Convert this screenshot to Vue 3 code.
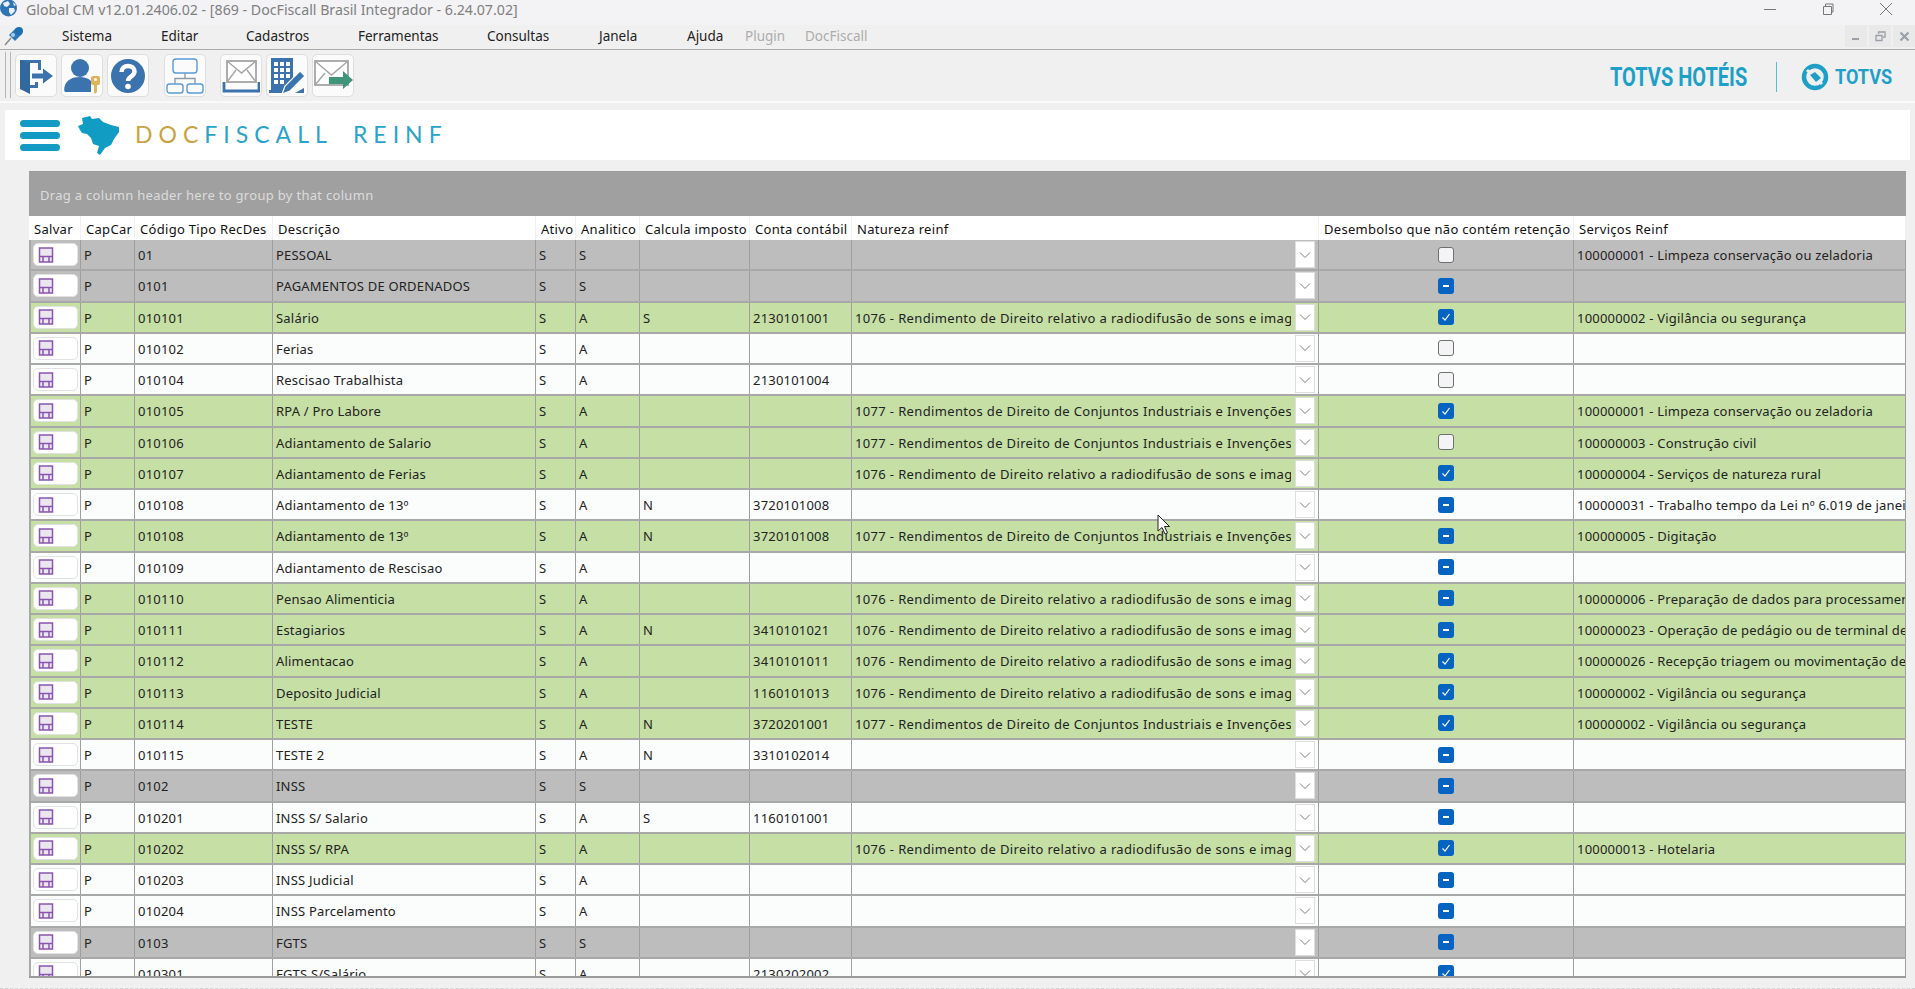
<script setup>
const menu = [
  { t: 'Sistema', w: 99, c: '' }, { t: 'Editar', w: 85, c: '' }, { t: 'Cadastros', w: 112, c: '' },
  { t: 'Ferramentas', w: 129, c: '' }, { t: 'Consultas', w: 112, c: '' }, { t: 'Janela', w: 88, c: '' },
  { t: 'Ajuda', w: 58, c: '' }, { t: 'Plugin', w: 60, c: 'off' }, { t: 'DocFiscall', w: 70, c: 'off' }
]
const headers = ['Salvar', 'CapCar', 'Código Tipo RecDes', 'Descrição', 'Ativo', 'Analitico', 'Calcula imposto', 'Conta contábil', 'Natureza reinf', 'Desembolso que não contém retenção', 'Serviços Reinf']
const A = '1076 - Rendimento de Direito relativo a radiodifusão de sons e imagens'
const B = '1077 - Rendimentos de Direito de Conjuntos Industriais e Invenções'
const V = '100000002 - Vigilância ou segurança'
const L = '100000001 - Limpeza conservação ou zeladoria'
// kind, code, description, analitico, calcula, conta, natureza, check, servico
const rows = [
  ['g', '01', 'PESSOAL', 'S', '', '', '', 'u', L],
  ['g', '0101', 'PAGAMENTOS DE ORDENADOS', 'S', '', '', '', 'm', ''],
  ['v', '010101', 'Salário', 'A', 'S', '2130101001', A, 'c', V],
  ['w', '010102', 'Ferias', 'A', '', '', '', 'u', ''],
  ['w', '010104', 'Rescisao Trabalhista', 'A', '', '2130101004', '', 'u', ''],
  ['v', '010105', 'RPA / Pro Labore', 'A', '', '', B, 'c', L],
  ['v', '010106', 'Adiantamento de Salario', 'A', '', '', B, 'u', '100000003 - Construção civil'],
  ['v', '010107', 'Adiantamento de Ferias', 'A', '', '', A, 'c', '100000004 - Serviços de natureza rural'],
  ['w', '010108', 'Adiantamento de 13º', 'A', 'N', '3720101008', '', 'm', '100000031 - Trabalho tempo da Lei nº 6.019 de janeiro de 1974'],
  ['v', '010108', 'Adiantamento de 13º', 'A', 'N', '3720101008', B, 'm', '100000005 - Digitação'],
  ['w', '010109', 'Adiantamento de Rescisao', 'A', '', '', '', 'm', ''],
  ['v', '010110', 'Pensao Alimenticia', 'A', '', '', A, 'm', '100000006 - Preparação de dados para processamento'],
  ['v', '010111', 'Estagiarios', 'A', 'N', '3410101021', A, 'm', '100000023 - Operação de pedágio ou de terminal de transporte'],
  ['v', '010112', 'Alimentacao', 'A', '', '3410101011', A, 'c', '100000026 - Recepção triagem ou movimentação de materiais'],
  ['v', '010113', 'Deposito Judicial', 'A', '', '1160101013', A, 'c', V],
  ['v', '010114', 'TESTE', 'A', 'N', '3720201001', B, 'c', V],
  ['w', '010115', 'TESTE 2', 'A', 'N', '3310102014', '', 'm', ''],
  ['g', '0102', 'INSS', 'S', '', '', '', 'm', ''],
  ['w', '010201', 'INSS S/ Salario', 'A', 'S', '1160101001', '', 'm', ''],
  ['v', '010202', 'INSS S/ RPA', 'A', '', '', A, 'c', '100000013 - Hotelaria'],
  ['w', '010203', 'INSS Judicial', 'A', '', '', '', 'm', ''],
  ['w', '010204', 'INSS Parcelamento', 'A', '', '', '', 'm', ''],
  ['g', '0103', 'FGTS', 'S', '', '', '', 'm', ''],
  ['w', '010301', 'FGTS S/Salário', 'A', '', '2130202002', '', 'c', '']
]
</script>

<template>
  <div class="page">
    <div class="title">
      <svg class="globe" width="18" height="17" viewBox="0 0 18 17">
        <circle cx="8.5" cy="8" r="8.5" fill="#2f74b5" />
        <path d="M3 3 L8 1 L10 4 L7 7 L4 6 Z M9 8 L14 8 L15 11 L11 15 L9 12 Z M13 2 L16 5 L14 6 Z" fill="#e9f0f7" />
      </svg>
      <span class="title-text">Global CM v12.01.2406.02 - [869 - DocFiscall Brasil Integrador - 6.24.07.02]</span>
      <div class="win">
        <svg width="14" height="14" viewBox="0 0 14 14"><path d="M1 7.5H13" stroke="#777" fill="none" /></svg>
        <svg width="14" height="14" viewBox="0 0 14 14"><path d="M2.5 4.5h8v8h-8z M4.5 4.5v-2.5h7.5v8h-1.5" stroke="#777" fill="none" /></svg>
        <svg width="14" height="14" viewBox="0 0 14 14"><path d="M1 1L13 13M13 1L1 13" stroke="#777" fill="none" /></svg>
      </div>
    </div>

    <div class="menubar">
      <svg class="pin" width="20" height="20" viewBox="0 0 20 20">
        <path d="M1 19 L7 12" stroke="#8a8a8a" stroke-width="1.5" />
        <path d="M5 9 L12 2 L18 8 L11 15 Z" fill="#2f78b8" />
        <circle cx="15" cy="5" r="4" fill="#1d6fb0" />
        <circle cx="9" cy="9" r="2" fill="#9fd0ef" />
      </svg>
      <div class="menu-items">
        <span v-for="m in menu" :key="m.t" class="menu-item" :class="m.c" :style="{ width: m.w + 'px' }">{{ m.t }}</span>
      </div>
      <div class="mdi">
        <span class="mdi-btn"><svg width="10" height="10" viewBox="0 0 10 10"><path d="M1 8H8" stroke="#9aa0a8" stroke-width="2" /></svg></span>
        <span class="mdi-btn"><svg width="11" height="11" viewBox="0 0 11 11"><path d="M1 4.5h6v5h-6z M3.5 3v-2h6.5v5h-2" stroke="#9aa0a8" stroke-width="1.3" fill="none" /></svg></span>
        <span class="mdi-btn"><svg width="11" height="11" viewBox="0 0 11 11"><path d="M1.5 1.5L9.5 9.5M9.5 1.5L1.5 9.5" stroke="#9aa0a8" stroke-width="2.2" /></svg></span>
      </div>
    </div>

    <div class="toolbar">
      <div class="grip"></div>
      <div class="tools">
        <div class="tool">
          <svg width="36" height="36" viewBox="0 0 36 36">
            <path d="M2 2H23V12H20V5H12V32L2 28Z" fill="#3a73ad" />
            <path d="M2 2L12 5V36L2 31Z" fill="#33689f" />
            <path d="M20 24V30H12V27H17V24Z" fill="#3a73ad" />
            <path d="M14 15.5H25V10.5L35 18L25 25.5V20.5H14Z" fill="#3a73ad" />
          </svg>
        </div>
        <div class="tool">
          <svg width="38" height="38" viewBox="0 0 38 38">
            <circle cx="17" cy="11" r="9" fill="#3a73ad" />
            <path d="M3 35C1 35 1 33 1.500 30C3 23 9 20 17 20C21 20 25 21 28 24V35Z" fill="#3a73ad" />
            <rect x="28" y="19" width="9" height="9" rx="2" fill="#e2b45a" />
            <path d="M31 27H34V35L32 37L31 35Z" fill="#e2b45a" />
            <circle cx="32.500" cy="22.500" r="1.500" fill="#fff" />
          </svg>
        </div>
        <div class="tool">
          <svg width="36" height="36" viewBox="0 0 36 36">
            <circle cx="18" cy="18" r="17" fill="#3a73ad" />
            <path d="M11.500 14C11.500 6 24.500 6 24.500 13.500C24.500 18.500 18 18.500 18 23" stroke="#fff" stroke-width="4.500" fill="none" />
            <circle cx="18" cy="28.500" r="2.800" fill="#fff" />
          </svg>
        </div>
        <div class="tool sep1">
          <svg width="38" height="36" viewBox="0 0 38 36" fill="none" stroke="#5b9bd5" stroke-width="1.400">
            <rect x="7" y="1" width="24" height="14" rx="3" />
            <rect x="1" y="26" width="16" height="9" rx="2.500" />
            <rect x="21" y="26" width="16" height="9" rx="2.500" />
            <path d="M19 15V20.500M9 26V20.500H29V26" stroke="#8f9ba8" />
          </svg>
        </div>
        <div class="tool sep2">
          <svg width="38" height="36" viewBox="0 0 38 36">
            <rect x="5" y="3" width="29" height="21" fill="#fff" stroke="#a5a5a5" stroke-width="1.800" />
            <path d="M5 3L19.500 15L34 3M5 24L14 12M34 24L25 12" fill="none" stroke="#a5a5a5" stroke-width="1.400" />
            <path d="M2 24V33H37V24" fill="none" stroke="#3a73ad" stroke-width="2.800" />
          </svg>
        </div>
        <div class="tool">
          <svg width="38" height="38" viewBox="0 0 38 38">
            <path d="M3 1H25V21L16 30V36H1V33H3Z" fill="#3a73ad" />
            <g fill="#fff">
              <rect x="6" y="5" width="4" height="4" /><rect x="12" y="5" width="4" height="4" /><rect x="18" y="5" width="4" height="4" />
              <rect x="6" y="11" width="4" height="4" /><rect x="12" y="11" width="4" height="4" /><rect x="18" y="11" width="4" height="4" />
              <rect x="6" y="17" width="4" height="4" /><rect x="12" y="17" width="4" height="4" /><rect x="18" y="17" width="4" height="4" />
              <rect x="6" y="23" width="4" height="4" /><rect x="12" y="23" width="4" height="4" />
            </g>
            <path d="M14 37L17 29L32 14L37 19L22 34Z" fill="#3a73ad" stroke="#fff" stroke-width="1.200" />
            <path d="M27 36H36V31Z" fill="#3a73ad" />
          </svg>
        </div>
        <div class="tool">
          <svg width="40" height="36" viewBox="0 0 40 36">
            <rect x="2" y="3" width="33" height="24" fill="#fff" stroke="#a5a5a5" stroke-width="1.800" />
            <path d="M2 3L18.500 17L35 3M2 27L12 15" fill="none" stroke="#a5a5a5" stroke-width="1.400" />
            <path d="M16 19H30V13L40 22L30 31V26H16Z" fill="#3f9479" />
          </svg>
        </div>
      </div>
      <div class="brand">
        <span class="hoteis">TOTVS HOTÉIS</span>
        <span class="brand-div"></span>
        <svg width="28" height="28" viewBox="0 0 28 28">
          <circle cx="14" cy="14" r="11" fill="none" stroke="#1f9fc7" stroke-width="4.500" />
          <path d="M6 7L21 21" stroke="#f0f0f0" stroke-width="3" />
          <path d="M9 12L14 9L20 15L15 19Z" fill="#1f9fc7" />
        </svg>
        <span class="totvs">TOTVS</span>
      </div>
    </div>

    <div class="banner">
      <div class="burger"><i></i><i></i><i></i></div>
      <svg class="brazil" width="42" height="40" viewBox="0 0 42 40">
        <path d="M0 11L5 9L4 3L12 1L14 4L21 3L25 7L33 10L41 12L41 17L36 24L33 30L27 33L22 40L19 38L21 31L15 29L13 23L9 19L4 18L2 15Z" fill="#119cc4" />
      </svg>
      <span class="logo-text"><span class="gold">DOC</span>FISCALL REINF</span>
    </div>

    <div class="grid">
      <div class="group-panel">Drag a column header here to group by that column</div>
      <div class="row head">
        <div v-for="h in headers" :key="h" class="hcell">{{ h }}</div>
      </div>
      <div v-for="(r, i) in rows" :key="i" class="row" :class="'k-' + r[0]">
        <div class="cell save-cell">
          <span class="save">
            <svg width="16" height="16" viewBox="0 0 16 16">
              <path d="M1.500 1H14.500V15H1.500Z" fill="#ebe7ef" stroke="#8a55b0" stroke-width="1.500" />
              <path d="M1.500 9.500H14.500" stroke="#8a55b0" stroke-width="1.500" />
              <path d="M5 9.500V15M11 9.500V15" stroke="#8a55b0" stroke-width="1.500" />
            </svg>
          </span>
        </div>
        <div class="cell">P</div>
        <div class="cell">{{ r[1] }}</div>
        <div class="cell">{{ r[2] }}</div>
        <div class="cell">S</div>
        <div class="cell">{{ r[3] }}</div>
        <div class="cell">{{ r[4] }}</div>
        <div class="cell">{{ r[5] }}</div>
        <div class="cell nat">
          <span class="nat-text">{{ r[6] }}</span>
          <span class="drop">
            <svg width="12" height="8" viewBox="0 0 12 8"><path d="M1 1.500L6 6.500L11 1.500" fill="none" stroke="#7c7c7c" /></svg>
          </span>
        </div>
        <div class="cell chk-cell">
          <span class="chk" :class="'c-' + r[7]">
            <svg v-if="r[7] === 'c'" width="10" height="10" viewBox="0 0 10 10"><path d="M1.500 5.500L4 8L8.500 2" fill="none" stroke="#fff" stroke-width="1.200" /></svg>
            <i v-if="r[7] === 'm'"></i>
          </span>
        </div>
        <div class="cell">{{ r[8] }}</div>
      </div>
    </div>
    <div class="dashed"></div>

    <svg class="cursor" width="14" height="22" viewBox="0 0 14 22">
      <path d="M1 1V17L5 13.500L8 20L10.500 19L7.500 12.500H12.500Z" fill="#fff" stroke="#222" stroke-width="1" />
    </svg>
  </div>
</template>

<style scoped>
.page {
  position: relative;
  width: 1915px;
  height: 989px;
  overflow: hidden;
  background: #f0f0f0;
  font-family: "Noto Sans", "Open Sans", sans-serif;
  display: flex;
  flex-direction: column;
}
.title {
  height: 25px;
  background: #f3f2f4;
  display: flex;
  align-items: flex-start;
  flex: none;
}
.globe { flex: none; margin-top: 0; }
.title-text {
  margin-left: 8px;
  margin-top: 1px;
  font-size: 14.200px;
  line-height: 17px;
  color: #7f7f7f;
  white-space: nowrap;
}
.win {
  margin-left: auto;
  margin-right: 22px;
  display: flex;
  gap: 44px;
  margin-top: 2px;
}
.menubar {
  height: 25px;
  flex: none;
  box-sizing: border-box;
  border-bottom: 1px solid #ababab;
  display: flex;
  align-items: flex-start;
  padding-left: 4px;
}
.pin { flex: none; margin-top: 1px; }
.menu-items {
  display: flex;
  margin-left: 38px;
  margin-top: 2px;
}
.menu-item {
  font-size: 13.500px;
  line-height: 19px;
  color: #222;
  flex: none;
  white-space: nowrap;
}
.menu-item.off { color: #adadad; }
.mdi {
  margin-left: auto;
  display: flex;
  gap: 2px;
  margin-right: 0;
}
.mdi-btn {
  width: 22px;
  height: 22px;
  background: #e9e9e9;
  display: flex;
  align-items: center;
  justify-content: center;
}
.toolbar {
  height: 51px;
  flex: none;
  box-sizing: border-box;
  display: flex;
  align-items: flex-start;
  border-bottom: 0;
}
.grip {
  margin: 2px 0 0 5px;
  width: 4px;
  height: 46px;
  border-left: 1px solid #b5b5b5;
  border-right: 1px solid #b5b5b5;
  flex: none;
}
.tools {
  display: flex;
  gap: 4px;
  margin: 4px 0 0 4px;
}
.tool {
  width: 42px;
  height: 43px;
  box-sizing: border-box;
  background: #fbfbfb;
  border: 1px solid #dedede;
  border-radius: 5px;
  display: flex;
  align-items: center;
  justify-content: center;
}
.sep1 { margin-left: 11px; }
.sep2 { margin-left: 10px; }
.brand {
  margin-left: auto;
  margin-right: 23px;
  display: flex;
  align-items: center;
  height: 46px;
  margin-top: 4px;
}
.hoteis, .totvs {
  font-family: "Roboto", sans-serif;
  font-weight: 700;
  color: #1f9fc7;
  white-space: nowrap;
  display: inline-block;
  transform-origin: left center;
}
.hoteis { font-size: 25px; width: 139px; transform: scaleX(0.8); }
.totvs { font-size: 21px; width: 57px; margin-left: 6px; transform: scaleX(0.86); }
.brand-div {
  width: 1px;
  height: 30px;
  background: #5fb7d6;
  margin: 0 24px 0 27px;
}
.banner {
  flex: none;
  height: 50px;
  margin: 9px 5px 0;
  background: #fff;
  border-top: 0;
  display: flex;
  align-items: center;
  padding-left: 15px;
  position: relative;
}
.page .banner::before {
  content: "";
  position: absolute;
  left: -5px;
  right: -5px;
  top: -9px;
  height: 2px;
  background: #fafafa;
}
.burger {
  display: flex;
  flex-direction: column;
  gap: 5px;
  width: 40px;
}
.burger i {
  display: block;
  height: 7px;
  border-radius: 3.500px;
  background: #149bc5;
}
.brazil { margin-left: 18px; }
.logo-text {
  margin-left: 15px;
  font-family: "Lato", sans-serif;
  font-size: 23px;
  letter-spacing: 6px;
  color: #2aa3c9;
  white-space: pre;
  word-spacing: 9px;
  margin-bottom: 2px;
}
.gold { color: #c9a243; }
.grid {
  flex: none;
  margin: 11px 0 0 29px;
  width: 1877px;
  height: 807px;
  box-sizing: border-box;
  border-top: 1px solid #9a9a9a;
  border-bottom: 2px solid #9a9a9a;
  overflow: hidden;
  background: #fff;
  outline: 0;
}
.group-panel {
  height: 44px;
  background: #a0a0a0;
  color: #dcdcdc;
  font-size: 13px;
  letter-spacing: 0.3px;
  line-height: 47px;
  padding-left: 11px;
  overflow: hidden;
}
.row {
  display: grid;
  grid-template-columns: 52px 54px 138px 263px 40px 64px 110px 102px 467px 255px 332px;
  height: 31.250px;
  box-sizing: border-box;
  border-bottom: 2px solid #a8a8a8;
  font-size: 13px;
  letter-spacing: 0.2px;
  color: #222;
}
.row.head {
  height: 24px;
  border-bottom: 0;
  background: #fff;
  color: #111;
  letter-spacing: 0.3px;
}
.k-g { background: #bdbdbd; }
.k-v { background: #c5dfa5; }
.k-w { background: #fbfcfc; }
.hcell {
  line-height: 22px;
  padding: 2px 0 0 5px;
  white-space: nowrap;
  overflow: hidden;
  border-right: 1px solid #f0f0f0;
  box-sizing: border-box;
}
.hcell:first-child { padding-left: 5px; }
.cell {
  line-height: 29px;
  padding: 1px 0 0 3px;
  white-space: nowrap;
  overflow: hidden;
  border-right: 1px solid #9f9f9f;
  box-sizing: border-box;
  border-left: 0;
}
.cell:first-child { border-left: 2px solid #a8a8a8; }
.save-cell {
  display: flex;
  align-items: center;
  padding: 0 0 0 2px;
}
.save {
  width: 45px;
  height: 23px;
  box-sizing: border-box;
  background: #fff;
  border: 1px solid #e2e2e2;
  border-radius: 5px;
  display: flex;
  align-items: center;
  padding-left: 4px;
}
.nat {
  display: flex;
  align-items: stretch;
  padding-right: 3px;
}
.nat-text {
  flex: 1;
  min-width: 0;
  overflow: hidden;
  letter-spacing: 0.35px;
}
.drop {
  flex: none;
  width: 20px;
  height: 27px;
  margin-top: 0;
  margin-left: 4px;
  background: #fff;
  border: 1px solid #dedede;
  box-sizing: border-box;
  display: flex;
  align-items: center;
  justify-content: center;
}
.chk-cell {
  display: flex;
  align-items: center;
  justify-content: center;
  padding: 0;
}
.chk {
  width: 16px;
  height: 16px;
  box-sizing: border-box;
  border-radius: 3px;
  display: flex;
  align-items: center;
  justify-content: center;
}
.c-u { background: #f4f3f5; border: 1.500px solid #6f6f6f; }
.c-c, .c-m { background: #0563c1; }
.c-m i {
  display: block;
  width: 6px;
  height: 2px;
  background: #fff;
}
.dashed {
  flex: none;
  margin-top: 10px;
  border-top: 1px dashed #d4d4d4;
}
.cursor {
  position: absolute;
  left: 1157px;
  top: 514px;
}
</style>
